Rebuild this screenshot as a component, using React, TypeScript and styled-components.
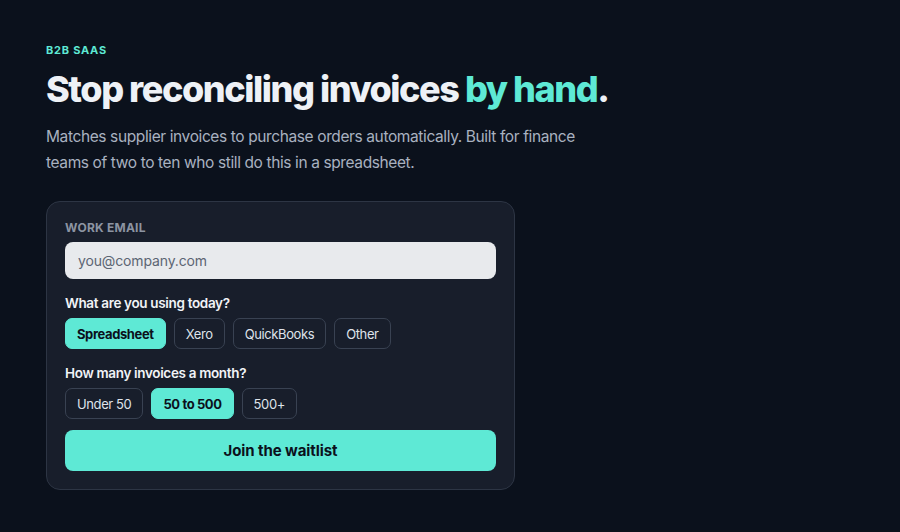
import React, { useState } from 'react';
import styled, { createGlobalStyle } from 'styled-components';

const GlobalStyle = createGlobalStyle`
  html, body {
    margin: 0;
    padding: 0;
    background: #0b111c;
  }
  body {
    font-family: Inter, "Noto Sans", "Liberation Sans", sans-serif;
    -webkit-font-smoothing: antialiased;
  }
`;

const Page = styled.main`
  min-height: 532px;
  box-sizing: border-box;
  padding: 43px 46px 40px;
  background: #0b111c;
  color: #eef1f6;
`;

const Eyebrow = styled.div`
  font-size: 11px;
  font-weight: 700;
  letter-spacing: 0.07em;
  color: #5ee9d5;
  line-height: 14px;
`;

const Heading = styled.h1`
  margin: 10px 0 0;
  font-size: 36px;
  line-height: 44px;
  font-weight: 800;
  letter-spacing: -0.04em;
  color: #eef1f6;
`;

const Accent = styled.span`
  color: #5ee9d5;
`;

const Lede = styled.p`
  margin: 13px 0 0;
  max-width: 560px;
  font-size: 15.5px;
  line-height: 26px;
  color: #a9b2c0;
  letter-spacing: -0.025em;
`;

const Card = styled.form`
  margin-top: 25px;
  width: 469px;
  box-sizing: border-box;
  padding: 18px 18px 18px;
  background: #181e2b;
  border: 1px solid #2d3544;
  border-radius: 14px;
  display: flex;
  flex-direction: column;
`;

const FieldLabel = styled.label`
  font-size: 12px;
  font-weight: 700;
  letter-spacing: 0.02em;
  line-height: 16px;
  color: #8c94a2;
`;

const EmailInput = styled.input`
  margin-top: 6px;
  height: 37px;
  box-sizing: border-box;
  padding: 0 13px;
  border: none;
  border-radius: 8px;
  background: #e8eaed;
  font-family: inherit;
  font-size: 14px;
  letter-spacing: -0.01em;
  color: #1b2230;
  outline: none;
  &::placeholder {
    color: #5c6573;
  }
`;

const Question = styled.div`
  margin-top: 15px;
  font-size: 13.5px;
  font-weight: 600;
  line-height: 18px;
  color: #f1f3f7;
  letter-spacing: -0.025em;
`;

const ChipRow = styled.div`
  margin-top: 6px;
  display: flex;
  gap: 8px;
`;

const Chip = styled.button<{ $active?: boolean }>`
  height: 31px;
  box-sizing: border-box;
  padding: 0 11px;
  border-radius: 7px;
  font-family: inherit;
  font-size: 13px;
  letter-spacing: -0.03em;
  font-weight: ${(p) => (p.$active ? 700 : 400)};
  color: ${(p) => (p.$active ? '#0b111c' : '#dfe3ea')};
  background: ${(p) => (p.$active ? '#5ee9d5' : 'transparent')};
  border: 1px solid ${(p) => (p.$active ? '#5ee9d5' : '#394252')};
  cursor: pointer;
`;

const Submit = styled.button`
  margin-top: 11px;
  height: 41px;
  border: none;
  border-radius: 8px;
  background: #5ee9d5;
  color: #0b111c;
  font-family: inherit;
  font-size: 15px;
  font-weight: 700;
  letter-spacing: -0.005em;
  cursor: pointer;
`;

const tools = ['Spreadsheet', 'Xero', 'QuickBooks', 'Other'];
const volumes = ['Under 50', '50 to 500', '500+'];

export default function App() {
  const [tool, setTool] = useState('Spreadsheet');
  const [volume, setVolume] = useState('50 to 500');

  return (
    <>
      <GlobalStyle />
      <Page>
        <Eyebrow>B2B SAAS</Eyebrow>
        <Heading>
          Stop reconciling invoices <Accent>by hand</Accent>.
        </Heading>
        <Lede>
          Matches supplier invoices to purchase orders automatically. Built for finance
          teams of two to ten who still do this in a spreadsheet.
        </Lede>
        <Card onSubmit={(e) => e.preventDefault()}>
          <FieldLabel htmlFor="email">WORK EMAIL</FieldLabel>
          <EmailInput id="email" type="email" placeholder="you@company.com" />
          <Question>What are you using today?</Question>
          <ChipRow>
            {tools.map((t) => (
              <Chip key={t} type="button" $active={tool === t} onClick={() => setTool(t)}>
                {t}
              </Chip>
            ))}
          </ChipRow>
          <Question>How many invoices a month?</Question>
          <ChipRow>
            {volumes.map((v) => (
              <Chip key={v} type="button" $active={volume === v} onClick={() => setVolume(v)}>
                {v}
              </Chip>
            ))}
          </ChipRow>
          <Submit type="submit">Join the waitlist</Submit>
        </Card>
      </Page>
    </>
  );
}
